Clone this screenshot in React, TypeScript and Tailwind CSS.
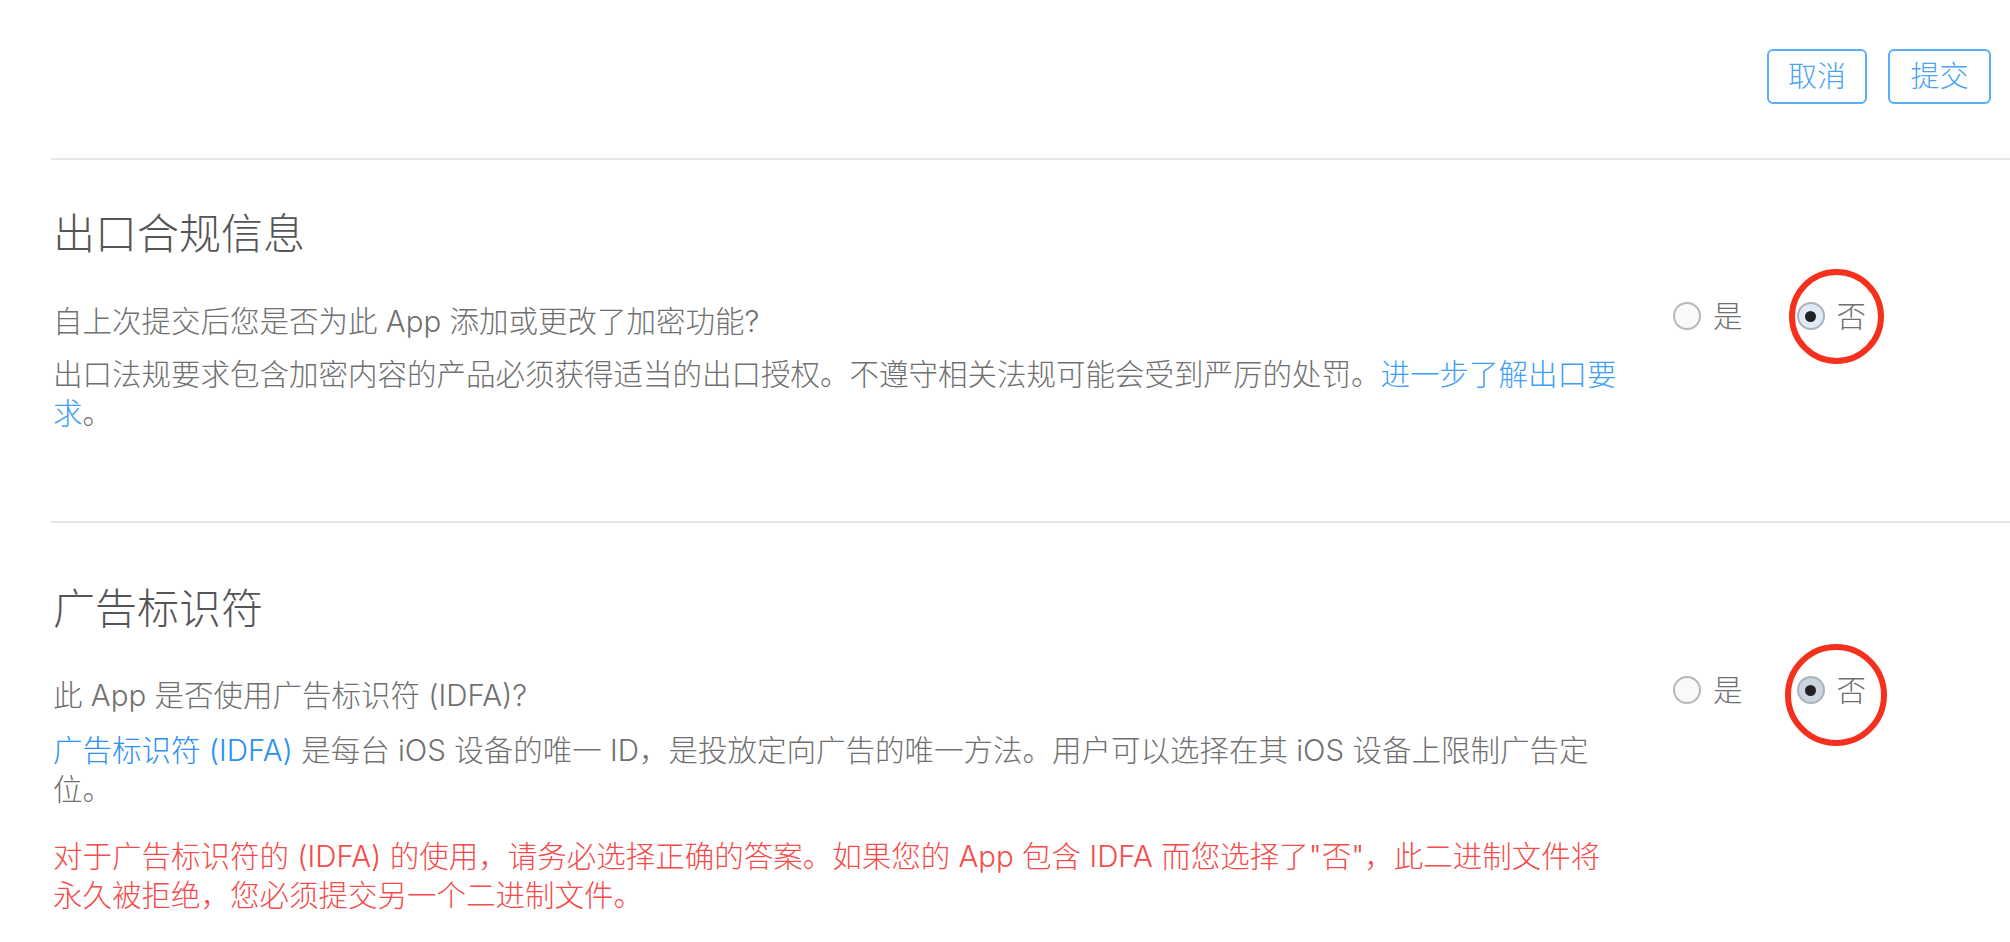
import type { ReactNode } from 'react';

const font = { fontFamily: 'Inter, "Noto Sans CJK SC", sans-serif' };

function Radio({ label, checked, tone, ring }: { label: string; checked?: boolean; tone?: string; ring?: ReactNode }) {
  return (
    <div className="relative flex h-[28px] items-center gap-[12px]">
      <span
        className={`flex h-[28px] w-[28px] items-center justify-center rounded-full border-2 ${
          checked ? `border-[#adb2b8] ${tone}` : 'border-[#b8b8b8] bg-[#f9f9f9]'
        }`}
      >
        {checked ? <span className="h-[11px] w-[11px] rounded-full bg-[#222]" /> : null}
      </span>
      <span className="text-[29.5px] leading-[28px] font-light text-[#707070]">{label}</span>
      {ring}
    </div>
  );
}

function Choice({ tone, ring }: { tone: string; ring: ReactNode }) {
  return (
    <div className="flex w-[240px] gap-[54px]">
      <Radio label="是" />
      <Radio label="否" checked tone={tone} ring={ring} />
    </div>
  );
}

export default function App() {
  return (
    <div className="min-h-[942px] w-[2010px] bg-white" style={font}>
      {/* header buttons */}
      <div className="flex justify-end gap-[21px] pt-[49px] pr-[19px]">
        <button type="button" className="h-[55px] w-[100px] rounded-[6px] border-2 border-[#5aaff8] text-[29px] font-light text-[#4aa3f3]">
          取消
        </button>
        <button type="button" className="h-[55px] w-[103px] rounded-[6px] border-2 border-[#5aaff8] text-[29px] font-light text-[#4aa3f3]">
          提交
        </button>
      </div>

      <div className="ml-[51px] mt-[54px] h-[2px] bg-[#e6e6e6]" />

      {/* export compliance */}
      <section className="flex pl-[53px]">
        <div className="w-[1572px]">
          <h2 className="mt-[49px] text-[42px] leading-[50px] font-light text-[#555]">出口合规信息</h2>
          <p className="mt-[43px] text-[29.5px] leading-[39px] font-light text-[#707070]">
            自上次提交后您是否为此 App 添加或更改了加密功能?
          </p>
          <p className="mt-[14px] text-[29.5px] leading-[39px] font-light text-[#707070]">
            出口法规要求包含加密内容的产品必须获得适当的出口授权。不遵守相关法规可能会受到严厉的处罚。
            <a className="text-[#3f9ef5]" href="#">进一步了解出口要求</a>。
          </p>
        </div>
        <div className="ml-[48px] mt-[142px]">
          <Choice
            tone="bg-[#dfeaf7]"
            ring={<span className="pointer-events-none absolute left-[-8px] top-[-33px] h-[95px] w-[95px] rounded-full border-[6px] border-[#f5301d]" />}
          />
        </div>
      </section>

      <div className="ml-[51px] mt-[88px] h-[2px] bg-[#e6e6e6]" />

      {/* advertising identifier */}
      <section className="flex pl-[53px]">
        <div className="w-[1572px]">
          <h2 className="mt-[61px] text-[42px] leading-[50px] font-light text-[#555]">广告标识符</h2>
          <p className="mt-[42px] text-[29.5px] leading-[39px] font-light text-[#707070]">此 App 是否使用广告标识符 (IDFA)?</p>
          <p className="mt-[16px] text-[29.5px] leading-[39px] font-light text-[#707070]">
            <a className="text-[#2a90f6]" href="#">广告标识符 (IDFA)</a> 是每台 iOS
            设备的唯一 ID，是投放定向广告的唯一方法。用户可以选择在其 iOS 设备上限制广告定位。
          </p>
          <p className="mt-[28px] text-[29.5px] leading-[39px] font-light text-[#f44b4b]">
            对于广告标识符的 (IDFA) 的使用，请务必选择正确的答案。如果您的 App 包含 IDFA 而您选择了"否"，此二进制文件将永久被拒绝，您必须提交另一个二进制文件。
          </p>
        </div>
        <div className="ml-[48px] mt-[153px]">
          <Choice
            tone="bg-[#cbd5df]"
            ring={<span className="pointer-events-none absolute left-[-12px] top-[-32px] h-[102px] w-[102px] rounded-full border-[6px] border-[#f5301d]" />}
          />
        </div>
      </section>
    </div>
  );
}
